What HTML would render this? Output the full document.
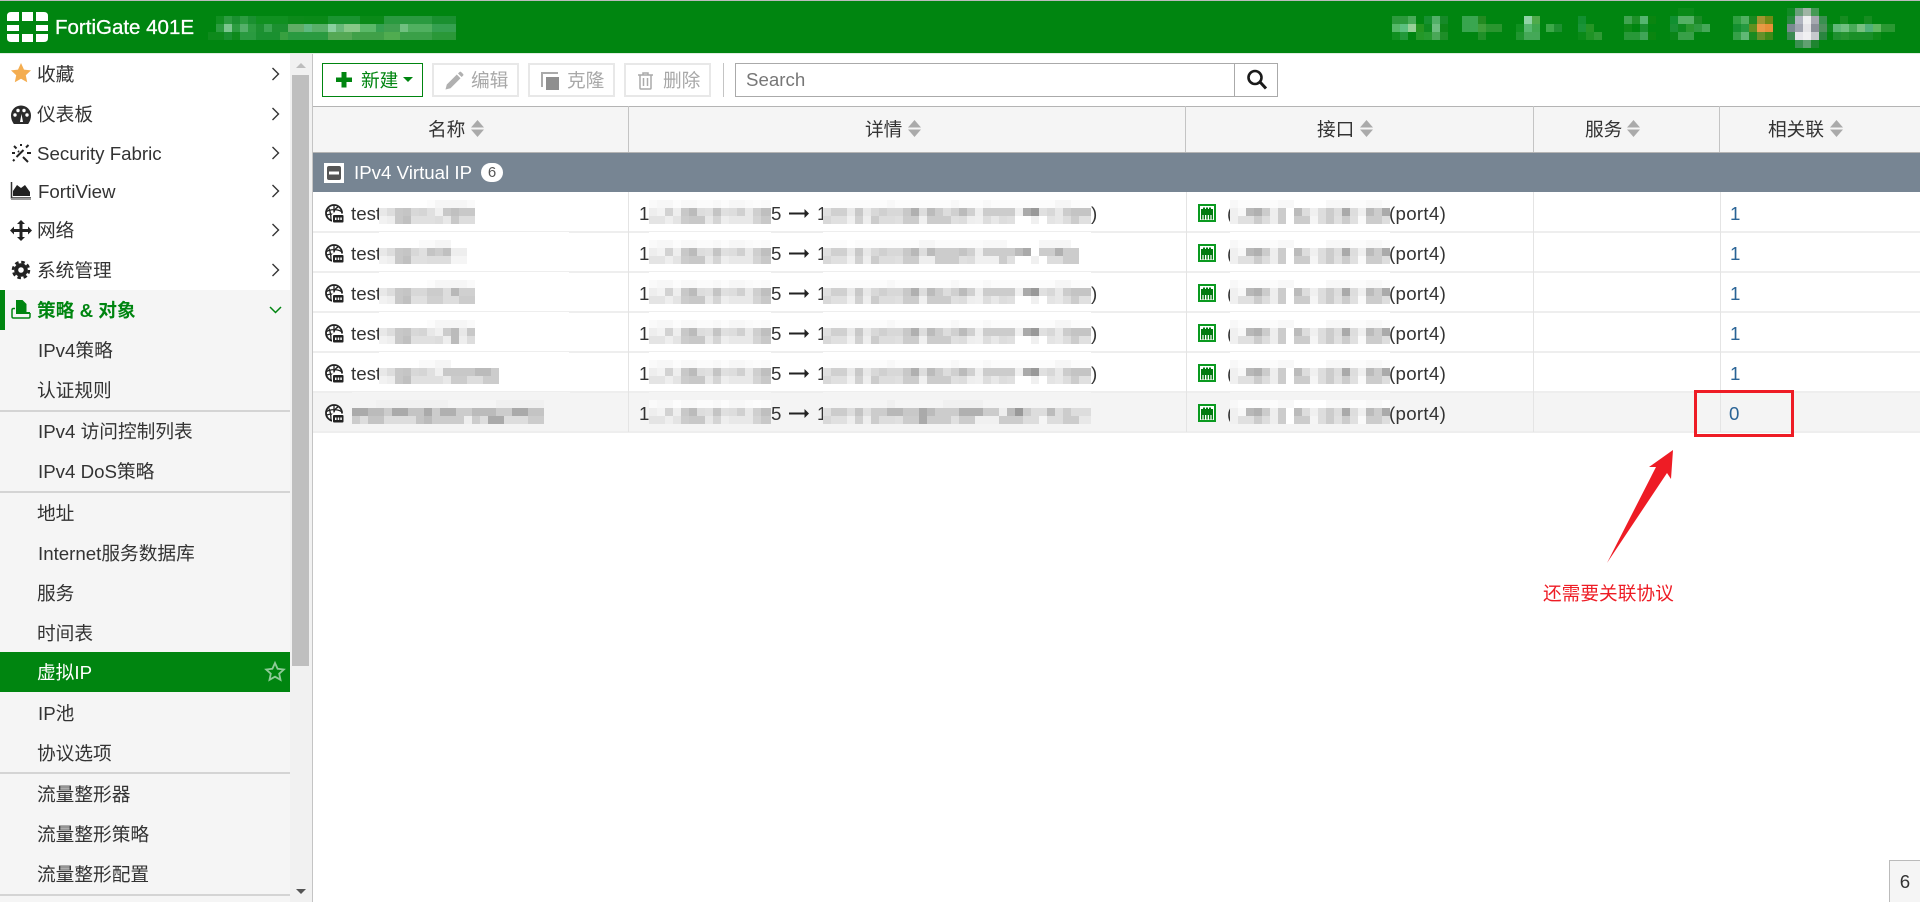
<!DOCTYPE html>
<html lang="zh">
<head>
<meta charset="utf-8">
<title>FortiGate 401E</title>
<style>
html,body{margin:0;padding:0;background:#fff}
body{width:1920px;height:902px;overflow:hidden;position:relative;font-family:"Liberation Sans","Noto Sans CJK SC",sans-serif;font-size:18.7px;color:#333}
.a{position:absolute}
.t{position:absolute;white-space:nowrap;line-height:40px;height:40px}
svg{position:absolute;overflow:visible}
.hl{position:absolute;height:2px;background:#eee}
.vl{position:absolute;width:1px;background:#e4e4e4}
.sep{position:absolute;left:0;width:290px;height:2px;background:#d4d4d4}
.btn{position:absolute;top:63px;height:30px;border:2px solid #e8e8e8;background:#fff}
.m{position:absolute;height:32px;background-repeat:no-repeat;background-color:#fff;background-size:100% 8px;background-position:0 8px,0 16px,0 24px}
.g{background-color:#f4f4f4}
.top rect{width:8px;height:8px}
.link{color:#2a6496}
.c2{width:122px;background-image:linear-gradient(90deg,#fafafa 8px,#f7f7f7 0 24px,#fcfcfc 0 32px,#f8f8f8 0 48px,#fbfbfb 0 64px,#f8f8f8 0 72px,#fcfcfc 0 80px,#f7f7f7 0 96px,#fafafa 0 104px,#fcfcfc 0 112px,#fafafa 0),linear-gradient(90deg,#eee 8px,#f3f3f3 0 16px,#d2d2d2 0 24px,#eee 0 32px,#c8c8c8 0 40px,#bbb 0 48px,#ddd 0 56px,#e0e0e0 0 64px,#c4c4c4 0 72px,#e0e0e0 0 80px,#ddd 0 88px,#d0d0d0 0 96px,#e8e8e8 0 104px,#cfcfcf 0 112px,#bfbfbf 0),linear-gradient(90deg,#e4e4e4 16px,#eee 0 24px,#e4e4e4 0 32px,#ccc 0 40px,#c8c8c8 0 56px,#e8e8e8 0 64px,#d4d4d4 0 72px,#eee 0 80px,#e8e8e8 0 104px,#d4d4d4 0 112px,#c8c8c8 0)}
.c3a{width:268px;background-image:linear-gradient(90deg,#fcfcfc 64px,#f8f8f8 0 72px,#fcfcfc 0 128px,#f8f8f8 0 136px,#fcfcfc 0 160px,#f8f8f8 0 168px,#fcfcfc 0 232px,#f6f6f6 0 248px,#fcfcfc 0),linear-gradient(90deg,#e0e0e0 8px,#d0d0d0 0 24px,#e8e8e8 0 32px,#c8c8c8 0 40px,#e8e8e8 0 48px,#d8d8d8 0 56px,#d0d0d0 0 64px,#d8d8d8 0 80px,#c8c8c8 0 88px,#b0b0b0 0 96px,#ddd 0 104px,#bbb 0 112px,#ccc 0 120px,#ddd 0 128px,#d0d0d0 0 136px,#bbb 0 144px,#d0d0d0 0 152px,#eee 0 160px,#ccc 0 192px,#f0f0f0 0 200px,#aaa 0 208px,#999 0 216px,#e0e0e0 0 224px,#d8d8d8 0 232px,#e8e8e8 0 240px,#ccc 0 248px,#c4c4c4 0),linear-gradient(90deg,#d8d8d8 8px,#e0e0e0 0 24px,#f0f0f0 0 32px,#d0d0d0 0 40px,#eee 0 48px,#ccc 0 56px,#ddd 0 72px,#e0e0e0 0 80px,#ccc 0 96px,#f0f0f0 0 104px,#ccc 0 128px,#e0e0e0 0 136px,#ddd 0 144px,#eee 0 152px,#f0f0f0 0 160px,#ddd 0 168px,#e8e8e8 0 176px,#ddd 0 184px,#e0e0e0 0 192px,#fff 0 208px,#f0f0f0 0 216px,#fff 0 224px,#e4e4e4 0 232px,#e8e8e8 0 240px,#ddd 0 248px,#ccc 0 256px,#e0e0e0 0)}
.c3b{width:268px;background-image:linear-gradient(90deg,#fcfcfc 24px,#fff 0 32px,#fcfcfc 0 96px,#f6f6f6 0 112px,#fbfbfb 0 160px,#f8f8f8 0 184px,#fff 0 216px,#f6f6f6 0 248px,#fff 0),linear-gradient(90deg,#e0e0e0 8px,#d0d0d0 0 24px,#e8e8e8 0 32px,#c8c8c8 0 40px,#e8e8e8 0 48px,#d8d8d8 0 56px,#d0d0d0 0 64px,#d8d8d8 0 80px,#c8c8c8 0 88px,#b8b8b8 0 96px,#ddd 0 104px,#bbb 0 112px,#ccc 0 136px,#c4c4c4 0 144px,#d0d0d0 0 152px,#eee 0 160px,#ccc 0 192px,#bbb 0 200px,#aaa 0 208px,#fff 0 216px,#ccc 0 232px,#b0b0b0 0 240px,#ccc 0 256px,#fff 0),linear-gradient(90deg,#d8d8d8 8px,#e0e0e0 0 24px,#f0f0f0 0 32px,#d0d0d0 0 40px,#eee 0 48px,#ccc 0 56px,#ddd 0 72px,#e0e0e0 0 80px,#ccc 0 96px,#eee 0 112px,#ccc 0 136px,#e0e0e0 0 144px,#ddd 0 152px,#f0f0f0 0 176px,#ccc 0 184px,#e0e0e0 0 192px,#fff 0 208px,#f0f0f0 0 216px,#fff 0 224px,#ddd 0 240px,#ccc 0 256px,#fff 0)}
.c3c{width:268px;background-image:linear-gradient(90deg,#f5f5f5 64px,#f0f0f0 0 72px,#f5f5f5 0 120px,#f0f0f0 0 160px,#f5f5f5 0),linear-gradient(90deg,#e0e0e0 8px,#ccc 0 24px,#ddd 0 32px,#c4c4c4 0 40px,#e0e0e0 0 48px,#ccc 0 64px,#b8b8b8 0 80px,#c8c8c8 0 96px,#aaa 0 104px,#bbb 0 112px,#ccc 0 136px,#b0b0b0 0 160px,#ccc 0 176px,#eee 0 184px,#bbb 0 192px,#999 0 200px,#ccc 0 208px,#ddd 0 224px,#bbb 0 232px,#ddd 0 240px,#ccc 0 248px,#ddd 0),linear-gradient(90deg,#d8d8d8 8px,#e0e0e0 0 24px,#eee 0 32px,#d0d0d0 0 40px,#eee 0 48px,#ccc 0 56px,#ddd 0 72px,#e0e0e0 0 80px,#ccc 0 96px,#aaa 0 104px,#ccc 0 128px,#e0e0e0 0 136px,#ccc 0 152px,#f0f0f0 0 176px,#ccc 0 200px,#ddd 0 216px,#f5f5f5 0 224px,#ddd 0 240px,#ccc 0 256px,#e8e8e8 0)}
.c4{width:160px;background-image:linear-gradient(90deg,#f8f8f8 8px,#fcfcfc 0 48px,#f8f8f8 0 64px,#fff 0 96px,#f8f8f8 0 120px,#fcfcfc 0 136px,#f8f8f8 0 152px,#fcfcfc 0),linear-gradient(90deg,#f0f0f0 8px,#f8f8f8 0 16px,#b8b8b8 0 24px,#b0b0b0 0 32px,#ccc 0 40px,#eee 0 48px,#ccc 0 56px,#fff 0 64px,#bbb 0 72px,#ddd 0 80px,#f0f0f0 0 88px,#ddd 0 96px,#ccc 0 104px,#ddd 0 112px,#aaa 0 120px,#ddd 0 128px,#f0f0f0 0 136px,#bbb 0 144px,#ccc 0 152px,#aaa 0),linear-gradient(90deg,#f0f0f0 8px,#e0e0e0 0 24px,#ccc 0 32px,#ddd 0 40px,#eee 0 48px,#ccc 0 56px,#fff 0 64px,#ccc 0 80px,#f5f5f5 0 88px,#ddd 0 96px,#ccc 0 104px,#e0e0e0 0 112px,#ccc 0 120px,#e0e0e0 0 128px,#fafafa 0 136px,#ccc 0 152px,#ddd 0)}
.n1,.n2,.n3,.n4,.n5{width:190px}
.n1{background-image:linear-gradient(90deg,#fff 48px,#fcfcfc 0 56px,#f6f6f6 0 88px,#fafafa 0 96px,#fff 0),linear-gradient(90deg,#e8e8e8 8px,#ddd 0 16px,#c8c8c8 0 24px,#c5c5c5 0 32px,#d8d8d8 0 40px,#d5d5d5 0 48px,#e0e0e0 0 56px,#f0f0f0 0 64px,#c8c8c8 0 72px,#c0c0c0 0 80px,#c8c8c8 0 96px,#fff 0),linear-gradient(90deg,#f2f2f2 8px,#eee 0 16px,#c8c8c8 0 24px,#c0c0c0 0 32px,#e0e0e0 0 56px,#ddd 0 64px,#e8e8e8 0 72px,#c8c8c8 0 80px,#ddd 0 96px,#fff 0)}
.n2{background-image:linear-gradient(90deg,#fff 40px,#fafafa 0 56px,#f5f5f5 0 72px,#fff 0),linear-gradient(90deg,#e8e8e8 8px,#ddd 0 16px,#c8c8c8 0 24px,#c5c5c5 0 32px,#d8d8d8 0 40px,#e0e0e0 0 48px,#c4c4c4 0 56px,#ccc 0 64px,#c0c0c0 0 72px,#eee 0 88px,#fff 0),linear-gradient(90deg,#f2f2f2 8px,#eee 0 16px,#c8c8c8 0 24px,#c0c0c0 0 32px,#e0e0e0 0 48px,#ddd 0 72px,#f5f5f5 0 88px,#fff 0)}
.n3{background-image:linear-gradient(90deg,#fff 48px,#fcfcfc 0 56px,#f6f6f6 0 88px,#fafafa 0 96px,#fff 0),linear-gradient(90deg,#e8e8e8 8px,#ddd 0 16px,#c8c8c8 0 24px,#c5c5c5 0 32px,#d8d8d8 0 48px,#ccc 0 64px,#ddd 0 72px,#b8b8b8 0 80px,#d0d0d0 0 96px,#fff 0),linear-gradient(90deg,#f2f2f2 8px,#eee 0 16px,#c8c8c8 0 24px,#c0c0c0 0 32px,#e0e0e0 0 48px,#d0d0d0 0 64px,#ddd 0 80px,#ccc 0 96px,#fff 0)}
.n4{background-image:linear-gradient(90deg,#fff 48px,#fcfcfc 0 56px,#f6f6f6 0 88px,#fafafa 0 96px,#fff 0),linear-gradient(90deg,#e8e8e8 8px,#ddd 0 16px,#c8c8c8 0 24px,#c5c5c5 0 32px,#d8d8d8 0 40px,#d5d5d5 0 48px,#e8e8e8 0 56px,#f0f0f0 0 64px,#ccc 0 72px,#bbb 0 80px,#e8e8e8 0 88px,#c8c8c8 0 96px,#fff 0),linear-gradient(90deg,#f2f2f2 8px,#eee 0 16px,#c8c8c8 0 24px,#c0c0c0 0 32px,#e0e0e0 0 56px,#ddd 0 64px,#eee 0 72px,#bbb 0 80px,#eee 0 88px,#ddd 0 96px,#fff 0)}
.n5{background-image:linear-gradient(90deg,#fff 40px,#fafafa 0 56px,#f5f5f5 0 72px,#fff 0),linear-gradient(90deg,#e8e8e8 8px,#ddd 0 16px,#c8c8c8 0 24px,#c5c5c5 0 32px,#d8d8d8 0 40px,#d5d5d5 0 48px,#e0e0e0 0 56px,#f0f0f0 0 64px,#c8c8c8 0 96px,#bbb 0 112px,#ccc 0 120px,#fff 0),linear-gradient(90deg,#f2f2f2 8px,#eee 0 16px,#c8c8c8 0 24px,#c0c0c0 0 32px,#e0e0e0 0 64px,#e8e8e8 0 72px,#ccc 0 88px,#ddd 0 104px,#ccc 0 120px,#fff 0)}
.n6{width:218px;background-image:linear-gradient(90deg,#f4f4f4 24px,#f1f1f1 0 96px,#f5f5f5 0 144px,#f0f0f0 0 192px,#f4f4f4 0),linear-gradient(90deg,#aaa 16px,#bbb 0 32px,#ccc 0 40px,#aaa 0 56px,#c4c4c4 0 72px,#aaa 0 80px,#ccc 0 88px,#b0b0b0 0 104px,#ccc 0 120px,#bbb 0 144px,#ccc 0 160px,#aaa 0 176px,#c4c4c4 0 192px,#f4f4f4 0),linear-gradient(90deg,#ccc 8px,#ddd 0 16px,#c4c4c4 0 32px,#ddd 0 64px,#c4c4c4 0 72px,#bbb 0 80px,#ccc 0 112px,#eee 0 120px,#ccc 0 128px,#ddd 0 136px,#aaa 0 152px,#ddd 0 176px,#ccc 0 192px,#f4f4f4 0)}
</style>
</head>
<body>

<!-- top bar -->
<div class="a" style="left:0;top:0;width:1920px;height:1px;background:#bbb"></div>
<div class="a" style="left:0;top:1px;width:1920px;height:52px;background:#008510"></div>
<div class="a" style="left:0;top:53px;width:1920px;height:1px;background:#dfeee1"></div>
<svg style="left:0;top:0" width="60" height="53" fill="#fff">
<path d="M11 12h8v9H7v-5q0-4 4-4zM22 12h11v9H22zM36 12h8q4 0 4 4v5H36zM7 25h12v6H7zM36 25h12v6H36zM7 34h12v8h-8q-4 0-4-4zM22 34h11v8H22zM36 34h12v4q0 4-4 4h-8z"/>
</svg>
<div class="t" style="left:55px;top:8px;color:#fff;font-size:20.5px;-webkit-text-stroke:.3px #fff">FortiGate 401E</div>

<div class="m" style="left:208px;top:8px;width:248px;background-color:transparent;background-image:linear-gradient(90deg,transparent 8px,#108f20 0 16px,#2c9c40 0 24px,#1a9030 0 32px,#2c9c40 0 40px,#1a9030 0 48px,#109020 0 80px,#0c8a1a 0 96px,#0a8a18 0 120px,#1a9430 0 152px,#0a8a18 0 176px,#2a9a40 0 224px,#1a9030 0 248px),linear-gradient(90deg,transparent 8px,#2c9c40 0 16px,#7bc68e 0 24px,#2c9c40 0 32px,#55b06a 0 40px,#2c9c40 0 48px,#1c9030 0 56px,#3aa450 0 64px,#1c9030 0 80px,#60ad65 0 96px,#5fb880 0 104px,#58b068 0 120px,#8ad0a0 0 128px,#68b878 0 136px,#88c888 0 152px,#5ab868 0 168px,#35a050 0 176px,#40a050 0 192px,#70c080 0 200px,#50b060 0 224px,#35a050 0 248px),linear-gradient(90deg,#0e8a1c 16px,#1a9030 0 24px,#0e8a1c 0 32px,#2a9a40 0 48px,#1a9030 0 72px,#38a040 0 80px,#2a9a40 0 120px,#55a855 0 144px,#40a048 0 176px,#50ac50 0 192px,#3aa048 0 224px,#2a9838 0 248px)"></div>

<svg class="top" style="left:0;top:0" width="1920" height="53">
<rect x="1392" y="16" fill="#2c9a3c"/><rect x="1400" y="16" fill="#2c9a3c"/><rect x="1408" y="16" fill="#48ab58"/><rect x="1424" y="16" fill="#169030"/><rect x="1432" y="16" fill="#52b068"/><rect x="1440" y="16" fill="#168a28"/>
<rect x="1392" y="24" fill="#55b868"/><rect x="1400" y="24" fill="#5cc080"/><rect x="1408" y="24" fill="#98d098"/><rect x="1416" y="24" fill="#259520"/><rect x="1424" y="24" fill="#0e8a20"/><rect x="1432" y="24" fill="#6dbd80"/><rect x="1440" y="24" fill="#0e8518"/>
<rect x="1392" y="32" fill="#109020"/><rect x="1400" y="32" fill="#22983a"/><rect x="1416" y="32" fill="#249828"/><rect x="1424" y="32" fill="#269a30"/><rect x="1432" y="32" fill="#4aa858"/><rect x="1440" y="32" fill="#1e8e28"/>
<rect x="1462" y="16" fill="#38a54e"/><rect x="1470" y="16" fill="#3aa650"/><rect x="1478" y="16" fill="#228b20"/>
<rect x="1462" y="24" fill="#38a54e"/><rect x="1470" y="24" fill="#3aa650"/><rect x="1478" y="24" fill="#3f9f3a"/><rect x="1486" y="24" fill="#2a962f"/><rect x="1494" y="24" fill="#2a962f"/>
<rect x="1478" y="32" fill="#209028"/>
<rect x="1524" y="16" fill="#8fd3a5"/><rect x="1532" y="16" fill="#4fab4a"/>
<rect x="1516" y="24" fill="#109020"/><rect x="1524" y="24" fill="#58b870"/><rect x="1532" y="24" fill="#40a850"/><rect x="1546" y="24" fill="#3ca848"/><rect x="1554" y="24" fill="#1e9030"/>
<rect x="1516" y="32" fill="#209530"/><rect x="1524" y="32" fill="#45a858"/><rect x="1532" y="32" fill="#45a858"/>
<rect x="1578" y="16" fill="#129030"/><rect x="1578" y="24" fill="#1a9438"/><rect x="1586" y="24" fill="#259525"/><rect x="1578" y="32" fill="#0a8a18"/><rect x="1586" y="32" fill="#1f9325"/><rect x="1594" y="32" fill="#2f9a35"/>
<rect x="1624" y="16" fill="#40a450"/><rect x="1632" y="16" fill="#1e9028"/><rect x="1640" y="16" fill="#55b570"/><rect x="1648" y="16" fill="#0a8510"/>
<rect x="1624" y="24" fill="#0e8a18"/><rect x="1640" y="24" fill="#1a9030"/>
<rect x="1624" y="32" fill="#289838"/><rect x="1632" y="32" fill="#289838"/><rect x="1640" y="32" fill="#40a558"/><rect x="1648" y="32" fill="#0a8510"/>
<rect x="1678" y="8" fill="#0a8a18"/><rect x="1686" y="8" fill="#0a8a18"/>
<rect x="1670" y="16" fill="#109030"/><rect x="1678" y="16" fill="#55b065"/><rect x="1686" y="16" fill="#55b065"/><rect x="1694" y="16" fill="#1a8a25"/>
<rect x="1670" y="24" fill="#1a9035"/><rect x="1678" y="24" fill="#0e8a20"/><rect x="1686" y="24" fill="#2a9830"/><rect x="1694" y="24" fill="#2f9a40"/><rect x="1702" y="24" fill="#45a858"/>
<rect x="1670" y="32" fill="#0a8518"/><rect x="1678" y="32" fill="#38a048"/><rect x="1686" y="32" fill="#38a048"/>
<rect x="1733" y="16" fill="#2fa040"/><rect x="1741" y="16" fill="#50b060"/><rect x="1749" y="16" fill="#1a8a20"/><rect x="1757" y="16" fill="#a09530"/><rect x="1765" y="16" fill="#708a15"/>
<rect x="1733" y="24" fill="#159030"/><rect x="1741" y="24" fill="#259a40"/><rect x="1749" y="24" fill="#60901f"/><rect x="1757" y="24" fill="#e89a45"/><rect x="1765" y="24" fill="#e59038"/>
<rect x="1733" y="32" fill="#35a048"/><rect x="1741" y="32" fill="#60b875"/><rect x="1749" y="32" fill="#1a8a20"/><rect x="1757" y="32" fill="#65902a"/><rect x="1765" y="32" fill="#408a18"/>
<rect x="1787" y="8" fill="#128a25"/><rect x="1795" y="8" fill="#6a9f7a"/><rect x="1803" y="8" fill="#a0b5a5"/><rect x="1811" y="8" fill="#459a55"/>
<rect x="1787" y="16" fill="#2a8a40"/><rect x="1795" y="16" fill="#b0b5c0"/><rect x="1803" y="16" fill="#eef0f0"/><rect x="1811" y="16" fill="#a5a8b0"/><rect x="1819" y="16" fill="#3a9050"/>
<rect x="1787" y="24" fill="#7a8a90"/><rect x="1795" y="24" fill="#a0a5b0"/><rect x="1803" y="24" fill="#e5e5e8"/><rect x="1811" y="24" fill="#8a8f98"/><rect x="1819" y="24" fill="#50905f"/>
<rect x="1787" y="32" fill="#3a8a50"/><rect x="1795" y="32" fill="#e5e5ea"/><rect x="1803" y="32" fill="#f0f0f2"/><rect x="1811" y="32" fill="#c5c8cc"/><rect x="1819" y="32" fill="#2a8540"/>
<rect x="1795" y="40" fill="#3a9050"/><rect x="1803" y="40" fill="#60a070"/><rect x="1811" y="40" fill="#1f8530"/>
<rect x="1840" y="16" fill="#168c20"/><rect x="1864" y="16" fill="#168c20"/>
<rect x="1827" y="24" fill="#0e8a20"/><rect x="1833" y="24" fill="#60b878"/><rect x="1841" y="24" fill="#70c080"/><rect x="1849" y="24" fill="#48ab58"/><rect x="1857" y="24" fill="#78c080"/><rect x="1865" y="24" fill="#50b078"/><rect x="1873" y="24" fill="#60b860"/><rect x="1881" y="24" fill="#2a9832"/><rect x="1887" y="24" fill="#2a9832"/>
<rect x="1833" y="32" fill="#1f9030"/><rect x="1841" y="32" fill="#259430"/><rect x="1849" y="32" fill="#1a8f28"/><rect x="1857" y="32" fill="#1a8f28"/><rect x="1865" y="32" fill="#1a8f28"/><rect x="1873" y="32" fill="#0e8a18"/>
</svg>

<!-- sidebar -->
<div class="a" style="left:0;top:290px;width:290px;height:612px;background:#f5f5f5"></div>
<div class="a" style="left:0;top:290px;width:5px;height:40px;background:#008510"></div>
<div class="a" style="left:0;top:652px;width:290px;height:40px;background:#008510"></div>
<div class="sep" style="top:410px"></div>
<div class="sep" style="top:491px"></div>
<div class="sep" style="top:772px"></div>
<div class="sep" style="top:894px"></div>

<div class="a" style="left:290px;top:54px;width:22px;height:848px;background:#f1f1f1"></div>
<div class="a" style="left:292px;top:75px;width:17px;height:591px;background:#bfbfbf"></div>
<svg style="left:290px;top:53px" width="22" height="849"><path d="M6 15l5-5 5 5z" fill="#bdbdbd"/><path d="M6 836h10l-5 5z" fill="#555"/></svg>
<div class="a" style="left:312px;top:54px;width:1px;height:848px;background:#c4c4c4"></div>

<div class="t" style="left:37px;top:55px">收藏</div>
<div class="t" style="left:37px;top:95px">仪表板</div>
<div class="t" style="left:37px;top:134px">Security Fabric</div>
<div class="t" style="left:38px;top:172px">FortiView</div>
<div class="t" style="left:37px;top:211px">网络</div>
<div class="t" style="left:37px;top:251px">系统管理</div>
<div class="t" style="left:37px;top:291px;color:#008510;font-weight:bold">策略 &amp; 对象</div>
<div class="t" style="left:38px;top:331px">IPv4策略</div>
<div class="t" style="left:37px;top:371px">认证规则</div>
<div class="t" style="left:38px;top:412px">IPv4 访问控制列表</div>
<div class="t" style="left:38px;top:452px">IPv4 DoS策略</div>
<div class="t" style="left:37px;top:494px">地址</div>
<div class="t" style="left:38px;top:534px">Internet服务数据库</div>
<div class="t" style="left:37px;top:574px">服务</div>
<div class="t" style="left:37px;top:614px">时间表</div>
<div class="t" style="left:37px;top:653px;color:#fff">虚拟IP</div>
<div class="t" style="left:38px;top:694px">IP池</div>
<div class="t" style="left:37px;top:734px">协议选项</div>
<div class="t" style="left:37px;top:775px">流量整形器</div>
<div class="t" style="left:37px;top:815px">流量整形策略</div>
<div class="t" style="left:37px;top:855px">流量整形配置</div>

<!-- sidebar icons -->
<svg style="left:0;top:0" width="300" height="902">
<path d="M21 63l3 6.600 7 .8-5.200 4.800 1.400 7L21 78.800 14.800 82.200l1.400-7L11 70.400l7-.8z" fill="#f4ad50"/>
<path d="M21 105.500a10 10 0 0 0-10 10c0 3 1 6 2.800 8.500h14.400c1.800-2.500 2.800-5.500 2.800-8.500a10 10 0 0 0-10-10z" fill="#2a2a2a"/>
<g fill="#fff"><circle cx="15" cy="115" r="1.700"/><circle cx="18" cy="110.500" r="1.700"/><circle cx="24" cy="110.500" r="1.700"/><circle cx="27" cy="115" r="1.700"/><path d="M20 122l1.500-8 1.500 8z"/></g>
<path d="M14 146l2.500 2.500M28.500 145l-2.500 2.500M23.500 150l-7 7M13 161l1.500-1.500M19 152l-1-1M23 157l5 5M12 153h3M27 153h4M21 144v2" fill="none" stroke="#222" stroke-width="2"/>
<path d="M11.500 182v16h19.500" fill="none" stroke="#333" stroke-width="1.500"/><path d="M13 196v-5l4-6 4 3 4-3 5 7v4z" fill="#222"/><path d="M11 198h20v2H11z" fill="#999"/>
<path d="M21 220l4 4h-2.500v5H28v-2.500l4 4-4 4V232h-5.500v5H25l-4 4-4-4h2.500v-5H14v2.500l-4-4 4-4V229h5.500v-5H17z" fill="#222"/>
<circle cx="21" cy="270" r="4.800" fill="none" stroke="#222" stroke-width="4"/><circle cx="21" cy="270" r="8" fill="none" stroke="#222" stroke-width="2.500" stroke-dasharray="3.600 2.680"/>
<path d="M15 308.500h-1.500q-1.500 0-1.500 1.500v6.500q0 1.500 1.500 1.500h15q1.500 0 1.500-1.500V313" fill="none" stroke="#008510" stroke-width="1.500"/><path d="M16 300h6.500l4 4v9H16z" fill="#008510"/><path d="M16 312h14v2H16z" fill="#008510"/>
<path d="M272.500 68l6 6-6 6M272.500 108l6 6-6 6M272.500 147l6 6-6 6M272.500 185l6 6-6 6M272.500 224l6 6-6 6M272.500 264l6 6-6 6" fill="none" stroke="#333" stroke-width="1.400"/>
<path d="M270 307l5.500 5.500 5.500-5.500" fill="none" stroke="#008510" stroke-width="1.500"/>
<path d="M275 663l2.600 5.800 6.200.7-4.600 4.200 1.300 6.100-5.500-3.100-5.500 3.100 1.300-6.100-4.600-4.200 6.200-.7z" fill="none" stroke="#8fcb98" stroke-width="1.800"/>
</svg>

<!-- toolbar -->
<div class="a" style="left:322px;top:63px;width:99px;height:32px;border:1px solid #008510"></div>
<svg style="left:322px;top:63px" width="110" height="34"><path d="M14 14.500h5.500V9h5v5.500h5.500v4.500h-5.500v5.500h-5V19H14z" fill="#008510"/><path d="M81 14h10l-5 5z" fill="#008510"/></svg>
<div class="t" style="left:361px;top:61px;color:#008510">新建</div>

<div class="btn" style="left:432px;width:83px"></div>
<svg style="left:432px;top:63px" width="90" height="34"><path d="M13.500 26.500l1.300-5 10-10 3.700 3.700-10 10zM26 10.500l1.500-1.500q.8-.8 1.600 0l2 2q.8.8 0 1.600L29.600 14z" fill="#b0b0b0"/></svg>
<div class="t" style="left:471px;top:61px;color:#a8a8a8">编辑</div>

<div class="btn" style="left:528px;width:83px"></div>
<svg style="left:528px;top:63px" width="90" height="34"><path d="M13 9h17v2H15v13h-2z" fill="#aaa"/><path d="M18 14h13v13H18z" fill="#8f8f8f"/></svg>
<div class="t" style="left:567px;top:61px;color:#a8a8a8">克隆</div>

<div class="btn" style="left:624px;width:83px"></div>
<svg style="left:624px;top:63px" width="90" height="34" fill="none" stroke="#aaa" stroke-width="1.500"><path d="M14 12h15M16 12.500v12.500q0 1 1 1h9q1 0 1-1V12.500M19 12v-2h5v2M19.500 15v8M23.500 15v8"/></svg>
<div class="t" style="left:663px;top:61px;color:#a8a8a8">删除</div>

<div class="a" style="left:723px;top:63px;width:1px;height:34px;background:#c4c4c4"></div>
<div class="a" style="left:735px;top:63px;width:541px;height:32px;border:1px solid #aaa;background:#fff"></div>
<div class="a" style="left:1234px;top:63px;width:1px;height:34px;background:#aaa"></div>
<div class="t" style="left:746px;top:60px;color:#777">Search</div>
<svg style="left:1240px;top:63px" width="34" height="34" fill="none" stroke="#1a1a1a"><circle cx="15" cy="14.500" r="6.500" stroke-width="2.600"/><path d="M20 19l6 6.500" stroke-width="3"/></svg>

<!-- table header -->
<div class="a" style="left:313px;top:106px;width:1607px;height:46px;background:#f5f5f5"></div>
<div class="a" style="left:313px;top:106px;width:1607px;height:1px;background:#b4b4b4"></div>
<div class="a" style="left:313px;top:152px;width:1607px;height:1px;background:#b4b4b4"></div>
<div class="vl" style="left:628px;top:106px;height:46px;background:#c4c4c4"></div>
<div class="vl" style="left:1185px;top:106px;height:46px;background:#c4c4c4"></div>
<div class="vl" style="left:1533px;top:106px;height:46px;background:#c4c4c4"></div>
<div class="vl" style="left:1719px;top:106px;height:46px;background:#c4c4c4"></div>
<div class="t" style="left:428px;top:110px">名称</div>
<div class="t" style="left:865px;top:110px">详情</div>
<div class="t" style="left:1317px;top:110px">接口</div>
<div class="t" style="left:1585px;top:110px">服务</div>
<div class="t" style="left:1768px;top:110px">相关联</div>
<svg style="left:0;top:0" width="1920" height="153" fill="#aaa">
<path d="M471 127.500l6.500-7.500 6.500 7.500zM471 129.500h13l-6.500 7.500zM908 127.500l6.500-7.500 6.500 7.500zM908 129.500h13l-6.500 7.500zM1360 127.500l6.500-7.500 6.500 7.500zM1360 129.500h13l-6.500 7.500zM1627 127.500l6.500-7.500 6.500 7.500zM1627 129.500h13l-6.500 7.500zM1830 127.500l6.500-7.500 6.500 7.500zM1830 129.500h13l-6.500 7.500z"/>
</svg>

<!-- group row -->
<div class="a" style="left:313px;top:153px;width:1607px;height:39px;background:#778593"></div>
<svg style="left:324px;top:163px" width="20" height="20"><rect width="20" height="20" fill="#fff"/><rect x="3" y="3" width="14" height="14" rx="2" fill="#555"/><rect x="5" y="8.500" width="10" height="3" fill="#fff"/></svg>
<div class="t" style="left:354px;top:153px;color:#fff">IPv4 Virtual IP</div>
<div class="a" style="left:481px;top:163px;width:22px;height:19px;border-radius:10px;background:#fff;color:#555;font-size:15px;line-height:20px;text-align:center">6</div>

<!-- rows -->
<div class="a" style="left:313px;top:393px;width:1607px;height:39px;background:#f4f4f4"></div>
<div class="hl" style="left:313px;top:231px;width:1607px"></div>
<div class="hl" style="left:313px;top:271px;width:1607px"></div>
<div class="hl" style="left:313px;top:311px;width:1607px"></div>
<div class="hl" style="left:313px;top:351px;width:1607px"></div>
<div class="hl" style="left:313px;top:391px;width:1607px"></div>
<div class="hl" style="left:313px;top:431px;width:1607px"></div>
<div class="vl" style="left:628px;top:192px;height:240px"></div>
<div class="vl" style="left:1186px;top:192px;height:240px"></div>
<div class="vl" style="left:1533px;top:192px;height:240px"></div>
<div class="vl" style="left:1720px;top:192px;height:240px"></div>

<!-- name column -->
<div class="t" style="left:351px;top:194px">test</div>
<div class="t" style="left:351px;top:234px">test</div>
<div class="t" style="left:351px;top:274px">test</div>
<div class="t" style="left:351px;top:314px">test</div>
<div class="t" style="left:351px;top:354px">test</div>
<div class="m n1" style="left:379px;top:192px"></div>
<div class="m n2" style="left:379px;top:232px"></div>
<div class="m n3" style="left:379px;top:272px"></div>
<div class="m n4" style="left:379px;top:312px"></div>
<div class="m n5" style="left:379px;top:352px"></div>
<div class="m n6 g" style="left:352px;top:392px"></div>

<!-- vip icons -->
<svg style="left:0;top:0" width="400" height="440">
<defs>
<g id="vip"><circle cx="9" cy="9" r="8" fill="#fff" stroke="#222" stroke-width="1.800"/><path d="M1.500 7.500C6 5 12 5 16.500 7.500M1.500 11c3-1 5-1 7-1M4 4.500C5.500 8 6 12 6 16M13 3c-2 1-3.500 3-4 5M9 1.500v7" fill="none" stroke="#222" stroke-width="1.300"/><rect x="7" y="9.500" width="11.500" height="9" rx="1" fill="#fff"/><rect x="8" y="11" width="10.500" height="7.500" rx="1" fill="#222"/><path d="M10 13.500h1.500v2.500H10zM12.700 13.500h1.500v2.500h-1.500zM15.300 13.500h1.500v2.500h-1.500z" fill="#fff"/></g>
</defs>
<use href="#vip" x="325" y="204"/><use href="#vip" x="325" y="244"/><use href="#vip" x="325" y="284"/><use href="#vip" x="325" y="324"/><use href="#vip" x="325" y="364"/><use href="#vip" x="325" y="404"/>
</svg>

<!-- details column -->
<div class="t" style="left:639px;top:194px">1</div>
<div class="t" style="left:639px;top:234px">1</div>
<div class="t" style="left:639px;top:274px">1</div>
<div class="t" style="left:639px;top:314px">1</div>
<div class="t" style="left:639px;top:354px">1</div>
<div class="t" style="left:639px;top:394px">1</div>
<div class="m c2" style="left:649px;top:192px"></div>
<div class="m c2" style="left:649px;top:232px"></div>
<div class="m c2" style="left:649px;top:272px"></div>
<div class="m c2" style="left:649px;top:312px"></div>
<div class="m c2" style="left:649px;top:352px"></div>
<div class="m c2 g" style="left:649px;top:392px"></div>
<div class="t" style="left:771px;top:194px">5</div>
<div class="t" style="left:771px;top:234px">5</div>
<div class="t" style="left:771px;top:274px">5</div>
<div class="t" style="left:771px;top:314px">5</div>
<div class="t" style="left:771px;top:354px">5</div>
<div class="t" style="left:771px;top:394px">5</div>
<svg style="left:0;top:0" width="830" height="440" fill="#222">
<path d="M789 212.500h15.500v-3.500l4.500 4.500-4.500 4.500v-3.500H789zM789 252.500h15.500v-3.500l4.500 4.500-4.500 4.500v-3.500H789zM789 292.500h15.500v-3.500l4.500 4.500-4.500 4.500v-3.500H789zM789 332.500h15.500v-3.500l4.500 4.500-4.500 4.500v-3.500H789zM789 372.500h15.500v-3.500l4.500 4.500-4.500 4.500v-3.500H789zM789 412.500h15.500v-3.500l4.500 4.500-4.500 4.500v-3.500H789z"/>
</svg>
<div class="t" style="left:817px;top:194px">1</div>
<div class="t" style="left:817px;top:234px">1</div>
<div class="t" style="left:817px;top:274px">1</div>
<div class="t" style="left:817px;top:314px">1</div>
<div class="t" style="left:817px;top:354px">1</div>
<div class="t" style="left:817px;top:394px">1</div>
<div class="t" style="left:1091px;top:194px">)</div>
<div class="t" style="left:1091px;top:274px">)</div>
<div class="t" style="left:1091px;top:314px">)</div>
<div class="t" style="left:1091px;top:354px">)</div>
<div class="m c3a" style="left:823px;top:192px"></div>
<div class="m c3b" style="left:823px;top:232px"></div>
<div class="m c3a" style="left:823px;top:272px"></div>
<div class="m c3a" style="left:823px;top:312px"></div>
<div class="m c3a" style="left:823px;top:352px"></div>
<div class="m c3c g" style="left:823px;top:392px"></div>

<!-- interface column -->
<svg style="left:0;top:0" width="1230" height="440">
<defs>
<g id="pt"><rect x="1" y="1" width="16" height="16" fill="#fff" stroke="#0a9a20" stroke-width="2"/><path d="M3 5h2V3.500h2V5h1V3.500h2V5h1V3.500h2V5h2v6H3z" fill="#007a10"/><path d="M3.700 11v4.500M6.300 11v4.500M9 11v4.500M11.700 11v4.500M14.300 11v4.500" stroke="#007a10" stroke-width="1.400" fill="none"/></g>
</defs>
<use href="#pt" x="1198" y="204"/><use href="#pt" x="1198" y="244"/><use href="#pt" x="1198" y="284"/><use href="#pt" x="1198" y="324"/><use href="#pt" x="1198" y="364"/><use href="#pt" x="1198" y="404"/>
</svg>
<div class="t" style="left:1227px;top:194px">(</div>
<div class="t" style="left:1227px;top:234px">(</div>
<div class="t" style="left:1227px;top:274px">(</div>
<div class="t" style="left:1227px;top:314px">(</div>
<div class="t" style="left:1227px;top:354px">(</div>
<div class="t" style="left:1227px;top:394px">(</div>
<div class="m c4" style="left:1230px;top:192px"></div>
<div class="m c4" style="left:1230px;top:232px"></div>
<div class="m c4" style="left:1230px;top:272px"></div>
<div class="m c4" style="left:1230px;top:312px"></div>
<div class="m c4" style="left:1230px;top:352px"></div>
<div class="m c4 g" style="left:1230px;top:392px"></div>
<div class="t" style="left:1389px;top:194px;letter-spacing:.3px">(port4)</div>
<div class="t" style="left:1389px;top:234px;letter-spacing:.3px">(port4)</div>
<div class="t" style="left:1389px;top:274px;letter-spacing:.3px">(port4)</div>
<div class="t" style="left:1389px;top:314px;letter-spacing:.3px">(port4)</div>
<div class="t" style="left:1389px;top:354px;letter-spacing:.3px">(port4)</div>
<div class="t" style="left:1389px;top:394px;letter-spacing:.3px">(port4)</div>

<!-- ref column -->
<div class="t link" style="left:1730px;top:194px">1</div>
<div class="t link" style="left:1730px;top:234px">1</div>
<div class="t link" style="left:1730px;top:274px">1</div>
<div class="t link" style="left:1730px;top:314px">1</div>
<div class="t link" style="left:1730px;top:354px">1</div>
<div class="t link" style="left:1729px;top:394px">0</div>

<!-- annotation -->
<div class="a" style="left:1694px;top:390px;width:94px;height:41px;border:3px solid #ee1c25"></div>
<svg style="left:0;top:0" width="1920" height="902"><path d="M1673 450L1671 479 1667 473 1607 563 1656 467 1649 467z" fill="#ee1c25"/></svg>
<div class="t" style="left:1543px;top:574px;color:#ee1c25">还需要关联协议</div>

<!-- bottom right box -->
<div class="a" style="left:1889px;top:860px;width:31px;height:42px;background:#f5f5f5;border-left:1px solid #bbb;border-top:1px solid #bbb;box-sizing:border-box;text-align:center;line-height:42px">6</div>

</body>
</html>
